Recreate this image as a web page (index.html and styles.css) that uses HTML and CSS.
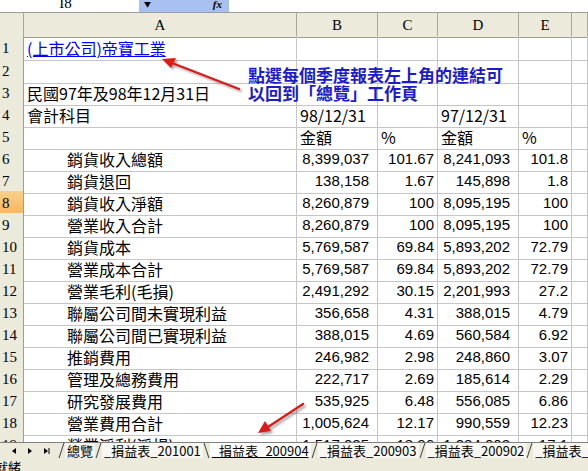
FILE: index.html
```html
<!DOCTYPE html>
<html lang="zh-Hant">
<head>
<meta charset="utf-8">
<title>損益表_200904</title>
<link rel="stylesheet" href="styles.css">
</head>
<body>
<div class="app">
  <div class="formula-bar">
    <div class="name-box"><span class="name-text">I8</span></div>
    <div class="fx-zone">
      <span class="drop">&#9660;</span>
      <span class="fx">fx</span>
    </div>
    <div class="formula-input"></div>
  </div>

  <div class="sheet">
    <div class="row head">
      <div class="corner"></div>
      <div class="ch">A</div>
      <div class="ch">B</div>
      <div class="ch">C</div>
      <div class="ch">D</div>
      <div class="ch">E</div>
      <div class="ch"></div>
    </div>

    <div class="row first">
      <div class="rh">1</div>
      <div class="c"><a class="link" href="#">(上市公司)帝寶工業</a></div>
      <div class="c"></div><div class="c"></div><div class="c"></div><div class="c"></div><div class="c"></div>
    </div>
    <div class="row">
      <div class="rh">2</div>
      <div class="c"></div><div class="c"></div><div class="c"></div><div class="c"></div><div class="c"></div><div class="c"></div>
    </div>
    <div class="row">
      <div class="rh">3</div>
      <div class="c">民國97年及98年12月31日</div>
      <div class="c"></div><div class="c"></div><div class="c"></div><div class="c"></div><div class="c"></div>
    </div>
    <div class="row">
      <div class="rh">4</div>
      <div class="c">會計科目</div>
      <div class="c">98/12/31</div>
      <div class="c"></div>
      <div class="c">97/12/31</div>
      <div class="c"></div><div class="c"></div>
    </div>
    <div class="row">
      <div class="rh">5</div>
      <div class="c"></div>
      <div class="c">金額</div>
      <div class="c">%</div>
      <div class="c">金額</div>
      <div class="c">%</div>
      <div class="c"></div>
    </div>
    <div class="row">
      <div class="rh">6</div>
      <div class="c item">銷貨收入總額</div>
      <div class="c num amt">8,399,037</div>
      <div class="c num">101.67</div>
      <div class="c num amt">8,241,093</div>
      <div class="c num">101.8</div>
      <div class="c"></div>
    </div>
    <div class="row">
      <div class="rh">7</div>
      <div class="c item">銷貨退回</div>
      <div class="c num amt">138,158</div>
      <div class="c num">1.67</div>
      <div class="c num amt">145,898</div>
      <div class="c num">1.8</div>
      <div class="c"></div>
    </div>
    <div class="row">
      <div class="rh sel">8</div>
      <div class="c item">銷貨收入淨額</div>
      <div class="c num amt">8,260,879</div>
      <div class="c num">100</div>
      <div class="c num amt">8,095,195</div>
      <div class="c num">100</div>
      <div class="c"></div>
    </div>
    <div class="row">
      <div class="rh">9</div>
      <div class="c item">營業收入合計</div>
      <div class="c num amt">8,260,879</div>
      <div class="c num">100</div>
      <div class="c num amt">8,095,195</div>
      <div class="c num">100</div>
      <div class="c"></div>
    </div>
    <div class="row">
      <div class="rh">10</div>
      <div class="c item">銷貨成本</div>
      <div class="c num amt">5,769,587</div>
      <div class="c num">69.84</div>
      <div class="c num amt">5,893,202</div>
      <div class="c num">72.79</div>
      <div class="c"></div>
    </div>
    <div class="row">
      <div class="rh">11</div>
      <div class="c item">營業成本合計</div>
      <div class="c num amt">5,769,587</div>
      <div class="c num">69.84</div>
      <div class="c num amt">5,893,202</div>
      <div class="c num">72.79</div>
      <div class="c"></div>
    </div>
    <div class="row">
      <div class="rh">12</div>
      <div class="c item">營業毛利(毛損)</div>
      <div class="c num amt">2,491,292</div>
      <div class="c num">30.15</div>
      <div class="c num amt">2,201,993</div>
      <div class="c num">27.2</div>
      <div class="c"></div>
    </div>
    <div class="row">
      <div class="rh">13</div>
      <div class="c item">聯屬公司間未實現利益</div>
      <div class="c num amt">356,658</div>
      <div class="c num">4.31</div>
      <div class="c num amt">388,015</div>
      <div class="c num">4.79</div>
      <div class="c"></div>
    </div>
    <div class="row">
      <div class="rh">14</div>
      <div class="c item">聯屬公司間已實現利益</div>
      <div class="c num amt">388,015</div>
      <div class="c num">4.69</div>
      <div class="c num amt">560,584</div>
      <div class="c num">6.92</div>
      <div class="c"></div>
    </div>
    <div class="row">
      <div class="rh">15</div>
      <div class="c item">推銷費用</div>
      <div class="c num amt">246,982</div>
      <div class="c num">2.98</div>
      <div class="c num amt">248,860</div>
      <div class="c num">3.07</div>
      <div class="c"></div>
    </div>
    <div class="row">
      <div class="rh">16</div>
      <div class="c item">管理及總務費用</div>
      <div class="c num amt">222,717</div>
      <div class="c num">2.69</div>
      <div class="c num amt">185,614</div>
      <div class="c num">2.29</div>
      <div class="c"></div>
    </div>
    <div class="row">
      <div class="rh">17</div>
      <div class="c item">研究發展費用</div>
      <div class="c num amt">535,925</div>
      <div class="c num">6.48</div>
      <div class="c num amt">556,085</div>
      <div class="c num">6.86</div>
      <div class="c"></div>
    </div>
    <div class="row">
      <div class="rh">18</div>
      <div class="c item">營業費用合計</div>
      <div class="c num amt">1,005,624</div>
      <div class="c num">12.17</div>
      <div class="c num amt">990,559</div>
      <div class="c num">12.23</div>
      <div class="c"></div>
    </div>
    <div class="row">
      <div class="rh">19</div>
      <div class="c item">營業淨利(淨損)</div>
      <div class="c num amt">1,517,025</div>
      <div class="c num">18.36</div>
      <div class="c num amt">1,384,003</div>
      <div class="c num">17.1</div>
      <div class="c"></div>
    </div>
  </div>

  <div class="tabbar">
    <div class="nav">
      <svg width="58" height="16" viewBox="0 0 58 16">
        <path d="M12 8 L16 5 L16 11 Z" fill="#000"/>
        <path d="M28 5 L32 8 L28 11 Z" fill="#000"/>
        <path d="M44 5 L48 8 L44 11 Z" fill="#000"/>
        <rect x="48.5" y="5" width="1" height="6" fill="#000"/>
      </svg>
    </div>
    <span class="sep fwd"></span>
    <span class="tab">總覽</span>
    <span class="sep fwd"></span>
    <span class="tab">_損益表_201001</span>
    <span class="sep back"></span>
    <span class="tab active">_損益表_200904</span>
    <span class="sep fwd"></span>
    <span class="tab">_損益表_200903</span>
    <span class="sep fwd"></span>
    <span class="tab">_損益表_200902</span>
    <span class="sep fwd"></span>
    <span class="tab">_損益表_200901</span>
  </div>

  <div class="statusbar"><span class="status">就緒</span></div>

  <div class="note">點選每個季度報表左上角的連結可<br>以回到「總覽」工作頁</div>

  <svg class="arrows" width="588" height="471" viewBox="0 0 588 471">
    <defs>
      <filter id="sh" x="-20%" y="-20%" width="140%" height="140%">
        <feGaussianBlur in="SourceAlpha" stdDeviation="1.2"/>
        <feOffset dx="1.5" dy="1.5" result="b"/>
        <feComponentTransfer><feFuncA type="linear" slope="0.35"/></feComponentTransfer>
        <feMerge><feMergeNode/><feMergeNode in="SourceGraphic"/></feMerge>
      </filter>
    </defs>
    <g filter="url(#sh)">
      <line x1="239" y1="89" x2="172" y2="63" stroke="#d81c1c" stroke-width="2.4" stroke-linecap="round"/>
      <path d="M162 59 L176 58 L171 68 Z" fill="#d81c1c"/>
      <line x1="303" y1="404" x2="268" y2="427" stroke="#d81c1c" stroke-width="2.4" stroke-linecap="round"/>
      <path d="M258 433 L265 421 L271 431 Z" fill="#d81c1c"/>
    </g>
  </svg>
</div>
</body>
</html>
```

FILE: styles.css
```css
* { box-sizing: border-box; }

html, body {
  margin: 0;
  padding: 0;
  background: #ffffff;
}

.app {
  position: relative;
  width: 588px;
  height: 471px;
  overflow: hidden;
  font-family: "Noto Sans CJK TC", "Noto Sans CJK SC", sans-serif;
  color: #000;
}

/* formula bar (cut off at top) */
.formula-bar {
  display: flex;
  height: 13px;
  border-bottom: 1px solid #9d9da1;
  background: #fff;
  overflow: hidden;
}
.name-box {
  width: 139px;
  display: flex;
  justify-content: center;
  align-items: flex-end;
}
.name-text {
  font-family: "Liberation Serif", serif;
  font-size: 15px;
  line-height: 15px;
  margin-bottom: 1px;
  padding-right: 8px;
}
.fx-zone {
  width: 90px;
  background: #a9c1f1;
  display: flex;
  justify-content: space-between;
  align-items: center;
  padding: 0 7px 0 5px;
}
.drop {
  font-size: 7px;
  line-height: 7px;
  margin-top: -3px;
}
.fx {
  font-family: "Liberation Serif", serif;
  font-style: italic;
  font-weight: bold;
  font-size: 11px;
  line-height: 11px;
  margin-top: -4px;
}
.formula-input { flex: 1; }

/* sheet grid */
.sheet {
  height: 429px;
  overflow: hidden;
}
.row {
  display: grid;
  grid-template-columns: 24px 273px 81px 60px 81px 53px 16px;
  height: 22px;
}
.row.head { height: 23px; }
.row.first { height: 23px; }

.corner, .ch, .rh {
  background: #ebeadb;
  border-right: 1px solid #aca899;
  border-bottom: 1px solid #aca899;
  font-family: "Liberation Serif", serif;
  font-size: 15px;
}
.ch {
  text-align: center;
  line-height: 24px;
  border-bottom-color: #9e9d93;
}
.corner { border-bottom-color: #9e9d93; }
.rh {
  padding-left: 2px;
  line-height: 24px;
  border-right-color: #9e9d93;
}
.rh.sel {
  background: linear-gradient(#f9d08a, #f5b55e);
}

.c {
  border-right: 1px solid #c6c6c6;
  border-bottom: 1px solid #c6c6c6;
  font-size: 16px;
  line-height: 24px;
  padding-left: 3px;
  white-space: nowrap;
  overflow: visible;
}
.c.item { padding-left: 43px; }
.c.num {
  text-align: right;
  padding-left: 0;
  padding-right: 3px;
  font-family: "Liberation Sans", "Noto Sans CJK TC", sans-serif;
  font-size: 15px;
}
.c.num.amt { padding-right: 8px; }

.link {
  color: #0000ff;
  text-decoration: underline;
}

/* sheet tabs */
.tabbar {
  display: flex;
  align-items: stretch;
  height: 16px;
  background: #ebeadb;
  border-top: 1px solid #808080;
  font-size: 13px;
  line-height: 15px;
  white-space: nowrap;
}
.nav {
  width: 58px;
  flex: none;
  display: flex;
  align-items: center;
}
.nav svg { display: block; }
.tab {
  padding: 0 2px;
  background: #f7f6f1;
  flex: none;
}
.tab.active {
  background: #ffffff;
  text-decoration: underline;
}
.sep {
  flex: none;
  width: 1px;
  margin: 0 3px;
  background: #3c3c3c;
}
.sep.fwd { transform: skewX(-18deg); }
.sep.back { transform: skewX(18deg); }

.statusbar {
  height: 13px;
  background: #ebeadb;
  font-size: 13px;
  line-height: 17px;
  overflow: hidden;
}
.status { margin-left: -5px; }

/* annotation overlay */
.note {
  position: absolute;
  left: 248px;
  top: 66px;
  font-size: 17px;
  line-height: 18px;
  font-weight: bold;
  color: #1c1cc8;
  white-space: nowrap;
}
.arrows {
  position: absolute;
  left: 0;
  top: 0;
  pointer-events: none;
}
```
